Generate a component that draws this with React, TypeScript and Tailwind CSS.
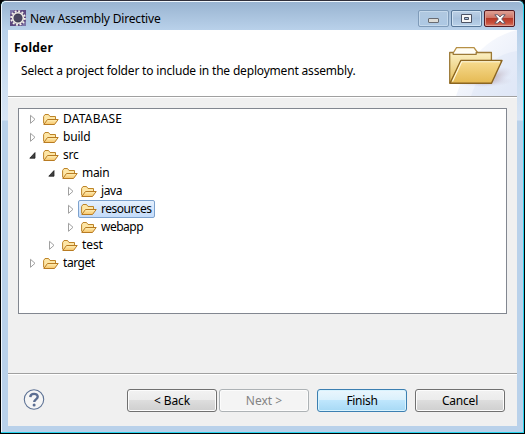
import React from "react";

function FolderIcon() {
  return (
    <svg width="16" height="13" viewBox="0 0 16 13" className="shrink-0">
      <defs>
        <linearGradient id="sf" x1="0" y1="0" x2="0" y2="1">
          <stop offset="0" stopColor="#fff0b8" />
          <stop offset="1" stopColor="#f6c468" />
        </linearGradient>
      </defs>
      <path d="M.6 10.5V3.5L2 1.5h3.5L7 3.5h5.5v3" fill="#fde6a6" stroke="#bd8428" />
      <path d="M.8 11.5L4.5 6.5h10.7L11.5 11.5z" fill="url(#sf)" stroke="#b87b22" strokeLinejoin="round" />
    </svg>
  );
}

function Arrow({ open }: { open?: boolean }) {
  return (
    <svg width="8" height="10" viewBox="0 0 8 10" className="shrink-0">
      {open ? (
        <path d="M6 2.6V8.2H.8z" fill="#404040" stroke="#202020" strokeWidth=".8" strokeLinejoin="round" />
      ) : (
        <path d="M1.5 1.3v8L6 5.3z" fill="#fff" stroke="#a0a0a0" />
      )}
    </svg>
  );
}

const indents = ["pl-[10px]", "pl-[29px]", "pl-[48px]"];

function Row({ level, label, open, selected, track }: { level: number; label: string; open?: boolean; selected?: boolean; track: string }) {
  return (
    <div className={`flex h-[18px] items-center ${indents[level]}`}>
      <Arrow open={open} />
      <div
        className={`ml-[3px] flex h-[18px] items-center rounded-[2px] border pl-[2px] pr-[3px] ${
          selected ? "w-[77px] border-[#7da2ce] bg-linear-to-b from-[#e5f0fd] to-[#c4dcfb]" : "border-transparent"
        }`}
      >
        <FolderIcon />
        <span className={`ml-[4px] block leading-[16px] ${track}`}>{label}</span>
      </div>
    </div>
  );
}

function LargeFolder() {
  return (
    <svg width="77" height="66" viewBox="0 0 77 66" className="block">
      <defs>
        <linearGradient id="swoosh" x1="0" y1="0" x2="1" y2="1">
          <stop offset="0" stopColor="#fff" />
          <stop offset="1" stopColor="#d7e0f5" />
        </linearGradient>
        <linearGradient id="back" x1="0" y1="0" x2="0" y2="1">
          <stop offset="0" stopColor="#fbf0c3" />
          <stop offset="1" stopColor="#e5bd59" />
        </linearGradient>
        <linearGradient id="front" x1="0" y1="0" x2="0" y2="1">
          <stop offset="0" stopColor="#f7dc91" />
          <stop offset="1" stopColor="#e5b952" />
        </linearGradient>
        <radialGradient id="shade">
          <stop offset="0" stopColor="#a98f91" stopOpacity=".6" />
          <stop offset="1" stopColor="#c9c5dc" stopOpacity="0" />
        </radialGradient>
      </defs>
      <path d="M77 0C57 5 41 16 26 38L16 66H77z" fill="url(#swoosh)" opacity=".7" />
      <path d="M77 21C57 24 42 35 31 66H77z" fill="#dae3f6" opacity=".4" />
      <ellipse cx="41" cy="51" rx="32" ry="6" fill="url(#shade)" />
      <ellipse cx="53" cy="47" rx="20" ry="8" fill="url(#shade)" transform="rotate(-20 53 47)" />
      <path d="M13.5 22.5L16.5 17.7H34L37.5 22.5" fill="#fffdf4" stroke="#b69045" strokeWidth="1.3" />
      <path d="M9.7 53V22.5h3.5v1.8h23v-1.8h15.2V53z" fill="url(#back)" stroke="#9c7936" strokeWidth="1.3" strokeLinejoin="round" />
      <path d="M10 53.3L20.8 30.5H62L51.5 53.3z" fill="url(#front)" stroke="#8b6521" strokeWidth="1.4" strokeLinejoin="round" />
      <path d="M12.5 51.5L21.7 31.8H60" fill="none" stroke="#fff9df" strokeWidth="1.1" />
    </svg>
  );
}

function AppIcon() {
  return (
    <svg width="16" height="16" viewBox="0 0 16 16">
      <rect width="16" height="16" fill="#5d477f" />
      <path d="M0 0h5L0 5zM16 16v-5l-5 5z" fill="#7c75a8" />
      <circle cx="8" cy="8" r="6.8" fill="none" stroke="#f3f1e9" strokeWidth="2" strokeDasharray="1.9 1.66" />
      <circle cx="8" cy="8" r="5.3" fill="#3f3b53" stroke="#efece5" strokeWidth="1.6" />
      <path d="M4.2 6h7.6M3.7 8h8.6M4.2 10h7.6" stroke="#66617c" strokeWidth=".6" />
    </svg>
  );
}

const caption = "flex h-[17px] w-[31px] items-center justify-center rounded-[2px] border";
const button = "flex h-[23px] w-[90px] items-center justify-center rounded-[3px] border leading-[18px]";

export default function App() {
  return (
    <div className="h-[434px] w-[525px] overflow-hidden bg-black font-['Noto_Sans','Open_Sans',sans-serif] text-[12px] text-black">
      <div className="flex h-[434px] w-[525px] flex-col rounded-t-[6px] border border-t-[#302f3a] border-r-black border-b-black border-l-black bg-[#28d2ec] pr-px pb-px">
        <div className="flex flex-1 flex-col rounded-t-[5px] border-t border-l border-[#f0f7fd] bg-[linear-gradient(to_bottom,#99b4d1_0px,#b9d1ea_28px,#cfe0f2_85px,#d8e5f5_118px,#b9d1ea_119px)] pr-[6px] pb-[6px] pl-[6px]">
          <header className="flex h-[28px] shrink-0 items-start pt-[8px] pl-[2px]">
            <AppIcon />
            <span className="ml-[4px] block leading-[17px] tracking-[-0.18px]">New Assembly Directive</span>
            <div className="mr-[2px] ml-auto flex gap-[2px]">
              <div className={`${caption} border-[#7f9bb9] bg-linear-to-b from-[#b0c8e0] to-[#adc8e4] shadow-[inset_0_0_0_1px_#c5d9ec]`}>
                <svg width="12" height="6" className="mt-[4px]"><rect x=".5" y=".5" width="10" height="4" rx=".5" fill="#deddd8" stroke="#686b72" /></svg>
              </div>
              <div className={`${caption} border-[#587798] bg-linear-to-b from-[#bdd0e5] via-[#a8c1dc] to-[#b9d1e9] shadow-[inset_0_0_0_1px_#d1e3f3]`}>
                <svg width="11" height="9"><path fillRule="evenodd" d="M.5.5h10v8H.5zM3.5 3.5v2h4v-2z" fill="#f7f7f7" stroke="#4c5365" /></svg>
              </div>
              <div className={`${caption} border-[#531b24] bg-[linear-gradient(#dfa297_0%,#ce7465_45%,#b73a29_50%,#c9503c_80%,#d9816f_100%)] shadow-[inset_0_0_0_1px_#df9c90]`}>
                <svg width="12" height="10" viewBox="0 0 12 10"><path d="M.8.8h3.1L6 3 8.1.8h3.1L7.7 5l3.5 4.2H8.1L6 7 3.9 9.2H.8L4.3 5z" fill="#fff" stroke="#575464" strokeWidth=".9" /></svg>
              </div>
            </div>
          </header>
          <main className="flex flex-1 flex-col bg-[#f0f0f0]">
            <section className="flex h-[67px] shrink-0 justify-between border-b border-[#a0a0a0] bg-white shadow-[0_1px_0_#fff]">
              <div className="pt-[9px] pl-[6px]">
                <h1 className="text-[12px] leading-[17px] font-bold tracking-[0.2px]">Folder</h1>
                <p className="mt-[6px] ml-[7px] leading-[17px] tracking-[-0.18px]">Select a project folder to include in the deployment assembly.</p>
              </div>
              <LargeFolder />
            </section>
            <div className="mt-[11px] ml-[10px] h-[206px] w-[489px] shrink-0 border border-[#828790] bg-white pt-px">
              <Row level={0} label="DATABASE" track="tracking-[0.2px]" />
              <Row level={0} label="build" track="tracking-[-0.2px]" />
              <Row level={0} label="src" open track="tracking-[-0.2px]" />
              <Row level={1} label="main" open track="tracking-[-0.3px]" />
              <Row level={2} label="java" track="tracking-[-0.4px]" />
              <Row level={2} label="resources" selected track="tracking-[-0.5px]" />
              <Row level={2} label="webapp" track="tracking-[-0.5px]" />
              <Row level={1} label="test" track="tracking-[-0.1px]" />
              <Row level={0} label="target" track="tracking-[-0.45px]" />
            </div>
            <div className="mt-auto flex h-[53px] shrink-0 items-start border-t border-[#a0a0a0] pt-[15px] shadow-[inset_0_1px_0_#fff]">
              <svg width="22" height="22" viewBox="0 0 22 22" className="ml-[15px]">
                <circle cx="11" cy="10.5" r="9.7" fill="#f5f5f5" stroke="#5d7295" strokeWidth="1.1" />
                <path d="M7.3 8.1C7.4 3.8 14.7 3.8 14.7 7.8c0 2.5-3.5 2.6-3.5 5.3" fill="none" stroke="#5b6d91" strokeWidth="2.4" />
                <circle cx="11.1" cy="16" r="1.5" fill="#5b6d91" />
              </svg>
              <div className={`${button} ml-[82px] border-[#707070] bg-[linear-gradient(#f2f2f2_0%,#ebebeb_49%,#dddddd_50%,#cfcfcf_100%)] tracking-[-0.1px] shadow-[inset_0_0_0_1px_#fcfcfc]`}>&lt; Back</div>
              <div className={`${button} ml-[2px] border-[#adb2b5] bg-[#f4f4f4] text-[#838383] shadow-[inset_0_0_0_1px_#fcfcfc]`}>Next &gt;</div>
              <div className={`${button} ml-[8px] border-[#3c7fb1] bg-[linear-gradient(#eaf6fd_0%,#d9f0fc_49%,#bee6fd_50%,#a7d9f5_100%)] tracking-[-0.3px] shadow-[inset_0_0_0_1px_#d8f3fe]`}>Finish</div>
              <div className={`${button} ml-[8px] border-[#707070] bg-[linear-gradient(#f2f2f2_0%,#ebebeb_49%,#dddddd_50%,#cfcfcf_100%)] tracking-[-0.2px] shadow-[inset_0_0_0_1px_#fcfcfc]`}>Cancel</div>
            </div>
          </main>
        </div>
      </div>
    </div>
  );
}
